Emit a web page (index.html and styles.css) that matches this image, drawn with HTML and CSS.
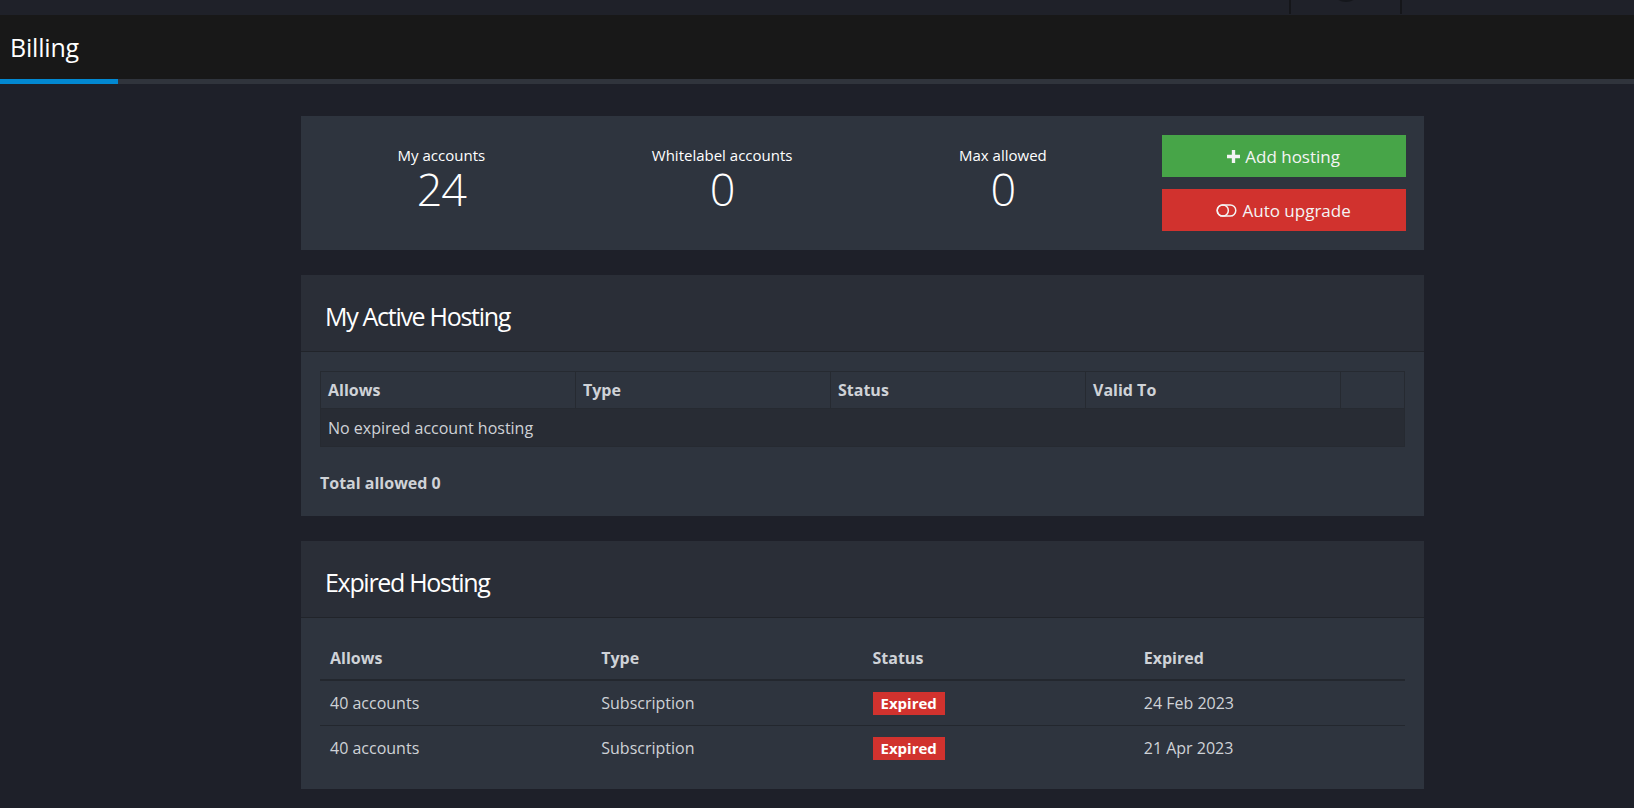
FILE: index.html
```html
<!DOCTYPE html>
<html lang="en">
<head>
<meta charset="utf-8">
<title>Billing</title>
<link rel="stylesheet" href="styles.css">
</head>
<body>
<div class="topbar">
  <div class="topbar-spacer"></div>
  <div class="topbar-item"><span class="avatar"></span></div>
  <div class="topbar-rest"></div>
</div>
<header class="page-header">
  <h1 class="page-title">Billing</h1>
</header>
<div class="progress"><div class="progress-fill"></div></div>

<main class="content">
  <section class="panel stats">
    <div class="stat">
      <div class="stat-label">My accounts</div>
      <div class="stat-value">24</div>
    </div>
    <div class="stat">
      <div class="stat-label">Whitelabel accounts</div>
      <div class="stat-value">0</div>
    </div>
    <div class="stat">
      <div class="stat-label">Max allowed</div>
      <div class="stat-value">0</div>
    </div>
    <div class="actions">
      <button class="btn btn-green">
        <svg class="ico-plus" viewBox="0 0 14 14" width="13" height="13"><path d="M5.2 0h3.6v5.2H14v3.6H8.8V14H5.2V8.8H0V5.2h5.2z" fill="currentColor"/></svg>
        Add hosting
      </button>
      <button class="btn btn-red">
        <svg class="ico-toggle" viewBox="0 0 22 14" width="21" height="13"><rect x="1" y="1" width="20" height="12" rx="6" fill="none" stroke="currentColor" stroke-width="1.6"/><circle cx="7" cy="7" r="6" fill="none" stroke="currentColor" stroke-width="1.6"/></svg>
        Auto upgrade
      </button>
    </div>
  </section>

  <section class="panel">
    <div class="panel-head"><h2 class="panel-title">My Active Hosting</h2></div>
    <div class="panel-body">
      <table class="grid-table">
        <thead>
          <tr><th>Allows</th><th>Type</th><th>Status</th><th>Valid To</th><th class="col-empty"></th></tr>
        </thead>
        <tbody>
          <tr class="striped"><td colspan="5">No expired account hosting</td></tr>
        </tbody>
      </table>
      <p class="total">Total allowed 0</p>
    </div>
  </section>

  <section class="panel">
    <div class="panel-head"><h2 class="panel-title">Expired Hosting</h2></div>
    <div class="panel-body panel-body-list">
      <table class="list-table">
        <thead>
          <tr><th>Allows</th><th>Type</th><th>Status</th><th>Expired</th></tr>
        </thead>
        <tbody>
          <tr><td>40 accounts</td><td>Subscription</td><td><span class="badge">Expired</span></td><td>24 Feb 2023</td></tr>
          <tr><td>40 accounts</td><td>Subscription</td><td><span class="badge">Expired</span></td><td>21 Apr 2023</td></tr>
        </tbody>
      </table>
    </div>
  </section>
</main>
</body>
</html>
```

FILE: styles.css
```css
* { box-sizing: border-box; }

html, body {
  margin: 0;
  padding: 0;
  background: #1e2029;
  font-family: "Open Sans", "Noto Sans", sans-serif;
  color: #cfd2d7;
  height: 100%;
  overflow: hidden;
}

.topbar {
  height: 15px;
  background: #1f2129;
  display: flex;
}
.topbar-spacer { width: 1289px; }
.topbar-item {
  width: 113px;
  border-left: 2px solid #15161a;
  border-right: 2px solid #15161a;
  height: 14px;
  display: flex;
  justify-content: center;
  overflow: hidden;
}
.avatar {
  width: 30px;
  height: 30px;
  border-radius: 50%;
  background: #15171c;
  margin-top: -28px;
}
.topbar-rest { flex: 1; }

.page-header {
  height: 64px;
  background: #181818;
  display: flex;
  align-items: center;
  padding: 0 10px;
}
.page-title {
  margin: 0;
  font-size: 25px;
  font-weight: 400;
  color: #ffffff;
  letter-spacing: -0.2px;
}

.progress {
  height: 5px;
  background: #30343c;
}
.progress-fill {
  width: 118px;
  height: 100%;
  background: #0288d1;
}

.content {
  margin-left: 301px;
  width: 1123px;
  padding-top: 32px;
  display: flex;
  flex-direction: column;
  gap: 25px;
}

.panel {
  background: #2e343e;
}

.stats {
  display: grid;
  grid-template-columns: repeat(4, 1fr);
  align-items: start;
  height: 134px;
}
.stat {
  text-align: center;
  color: #ffffff;
  padding-top: 29px;
}
.stat-label {
  font-size: 15px;
  line-height: 20px;
}
.stat-value {
  font-size: 45px;
  font-weight: 300;
  line-height: 48px;
  letter-spacing: -1px;
}
.actions {
  display: flex;
  flex-direction: column;
  align-items: center;
  gap: 12px;
  padding-top: 19px;
}
.btn {
  width: 244px;
  height: 42px;
  border: 0;
  color: #f4f4f4;
  font-family: "Open Sans", sans-serif;
  font-size: 17px;
  display: flex;
  align-items: center;
  justify-content: center;
  gap: 5px;
  padding: 0;
}
.btn-green { background: #47a548; }
.btn-red { background: #d1322e; }
.ico-plus { margin-top: 1px; }
.ico-toggle { margin-top: 1px; }

.panel-head {
  height: 77px;
  background: #2a2e37;
  border-bottom: 1px solid #21242a;
  display: flex;
  align-items: center;
  padding: 0 24px;
}
.panel-title {
  margin: 0;
  font-size: 25px;
  font-weight: 400;
  color: #ffffff;
  letter-spacing: -1.3px;
  margin-top: 6px;
}

.panel-body {
  padding: 19px 19px 18px;
}
.panel-body-list {
  padding-bottom: 19px;
}

table {
  width: 100%;
  border-collapse: collapse;
  font-size: 16px;
}
th {
  text-align: left;
  font-weight: 700;
  color: #cfd2d7;
}

.grid-table th,
.grid-table td {
  border: 1px solid #262a31;
  padding: 0 7px;
  height: 37px;
}
.grid-table th { width: 255px; }
.grid-table th.col-empty { width: auto; }
.grid-table tr.striped td { background: #282c34; height: 38px; }

.total {
  margin: 0;
  padding-top: 25px;
  padding-bottom: 4px;
  font-weight: 700;
  font-size: 16px;
  line-height: 22px;
}

.list-table th,
.list-table td {
  padding: 0 10px;
  width: 25%;
}
.list-table th {
  height: 43px;
  border-bottom: 2px solid #23272e;
}
.list-table td {
  height: 45px;
  border-bottom: 1px solid #23272e;
}
.list-table tbody tr:last-child td { border-bottom: 0; }

.badge {
  display: inline-block;
  background: #d1322e;
  color: #ffffff;
  font-weight: 700;
  font-size: 15px;
  line-height: 23px;
  padding: 0 8px;
  margin-top: 2px;
}
```
